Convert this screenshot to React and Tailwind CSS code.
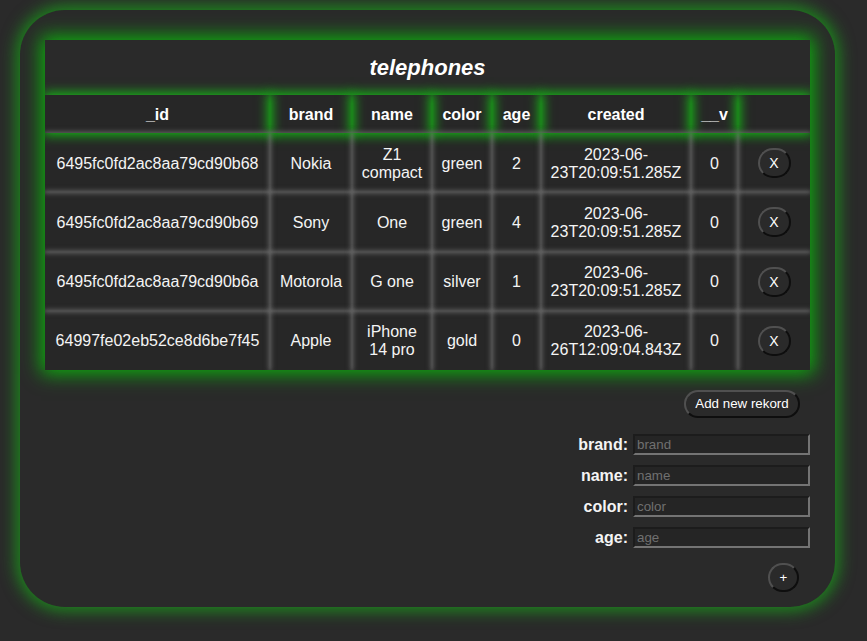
import React from "react";

const rows = [
  { id: "6495fc0fd2ac8aa79cd90b68", brand: "Nokia", name: "Z1 compact", color: "green", age: 2, created: "2023-06-23T20:09:51.285Z", v: 0 },
  { id: "6495fc0fd2ac8aa79cd90b69", brand: "Sony", name: "One", color: "green", age: 4, created: "2023-06-23T20:09:51.285Z", v: 0 },
  { id: "6495fc0fd2ac8aa79cd90b6a", brand: "Motorola", name: "G one", color: "silver", age: 1, created: "2023-06-23T20:09:51.285Z", v: 0 },
  { id: "64997fe02eb52ce8d6be7f45", brand: "Apple", name: "iPhone 14 pro", color: "gold", age: 0, created: "2023-06-26T12:09:04.843Z", v: 0 },
];

const headers = ["_id", "brand", "name", "color", "age", "created", "__v", ""];

const btn =
  "bg-[#2a2a2a] text-white text-[13.33px] border-2 border-t-[#505050] border-l-[#505050] border-b-[#0e0e0e] border-r-[#0e0e0e] rounded-full flex items-center justify-center leading-none";

function Field({ label }) {
  return (
    <div className="flex items-center h-[21px]">
      <span className="font-bold text-[16px] text-[#f4f4f4] mr-[5px]">{label}:</span>
      <input
        placeholder={label}
        className="w-[177px] h-[21px] bg-[#252525] border-2 border-t-[#1c1c1c] border-l-[#1c1c1c] border-b-[#747474] border-r-[#747474] px-[2px] text-[13.33px] text-white placeholder:text-[#707070] outline-none"
      />
    </div>
  );
}

export default function App() {
  return (
    <div className="min-h-[641px] w-full bg-[#2a2a2a] pt-[10px] pb-[34px] font-['Liberation_Sans',Arial,sans-serif] text-[#f4f4f4]">
      <div className="ml-[20px] w-[815px] rounded-[45px] bg-[#2a2a2a] shadow-[0_0_16px_4px_rgba(25,170,25,0.75)] px-[25px] pt-[30px] pb-[15px]">
        <div className="w-[765px] overflow-hidden bg-[#272727] shadow-[0_0_18px_4px_rgba(10,190,10,0.9)]">
          <div className="h-[55px] flex items-center justify-center bg-[#2a2a2a]">
            <span className="text-[22px] font-bold italic text-white">telephones</span>
          </div>
          <table className="w-full table-fixed border-separate border-spacing-0">
            <colgroup>
              <col className="w-[225px]" />
              <col className="w-[82px]" />
              <col className="w-[80px]" />
              <col className="w-[60px]" />
              <col className="w-[49px]" />
              <col className="w-[150px]" />
              <col className="w-[47px]" />
              <col className="w-[72px]" />
            </colgroup>
            <thead>
              <tr>
                {headers.map((h, i) => (
                  <th
                    key={i}
                    className="h-[38px] p-0 pt-[2px] text-[16px] font-bold text-white text-center shadow-[0_0_11px_2px_rgba(20,200,20,0.95)]"
                  >
                    {h}
                  </th>
                ))}
              </tr>
            </thead>
            <tbody>
              {rows.map((r) => (
                <tr key={r.id}>
                  {[r.id, r.brand, r.name, r.color, r.age, r.created, r.v].map((c, i) => (
                    <td
                      key={i}
                      className="h-[59.25px] px-[8px] pt-[2px] pb-0 text-center text-[16px] leading-[18px] shadow-[0_0_5px_1px_rgba(125,125,125,0.75)] break-words"
                    >
                      {i === 5 ? (
                        <>
                          {String(c).slice(0, 8)}
                          <br />
                          {String(c).slice(8)}
                        </>
                      ) : (
                        c
                      )}
                    </td>
                  ))}
                  <td className="h-[59.25px] p-0 pt-[1px] shadow-[0_0_5px_1px_rgba(125,125,125,0.75)]">
                    <div className="flex justify-center">
                      <button className={btn + " w-[33px] h-[30px] text-[14px]"}>X</button>
                    </div>
                  </td>
                </tr>
              ))}
            </tbody>
          </table>
        </div>

        <div className="w-[765px] flex flex-col items-end">
          <button className={btn + " mt-[20px] mr-[10px] w-[116px] h-[28px]"}>Add new rekord</button>
          <div className="mt-[16px] flex flex-col items-end gap-[10px]">
            <Field label="brand" />
            <Field label="name" />
            <Field label="color" />
            <Field label="age" />
          </div>
          <button className={btn + " mt-[15px] mr-[11px] w-[31px] h-[29px]"}>+</button>
        </div>
      </div>
    </div>
  );
}
